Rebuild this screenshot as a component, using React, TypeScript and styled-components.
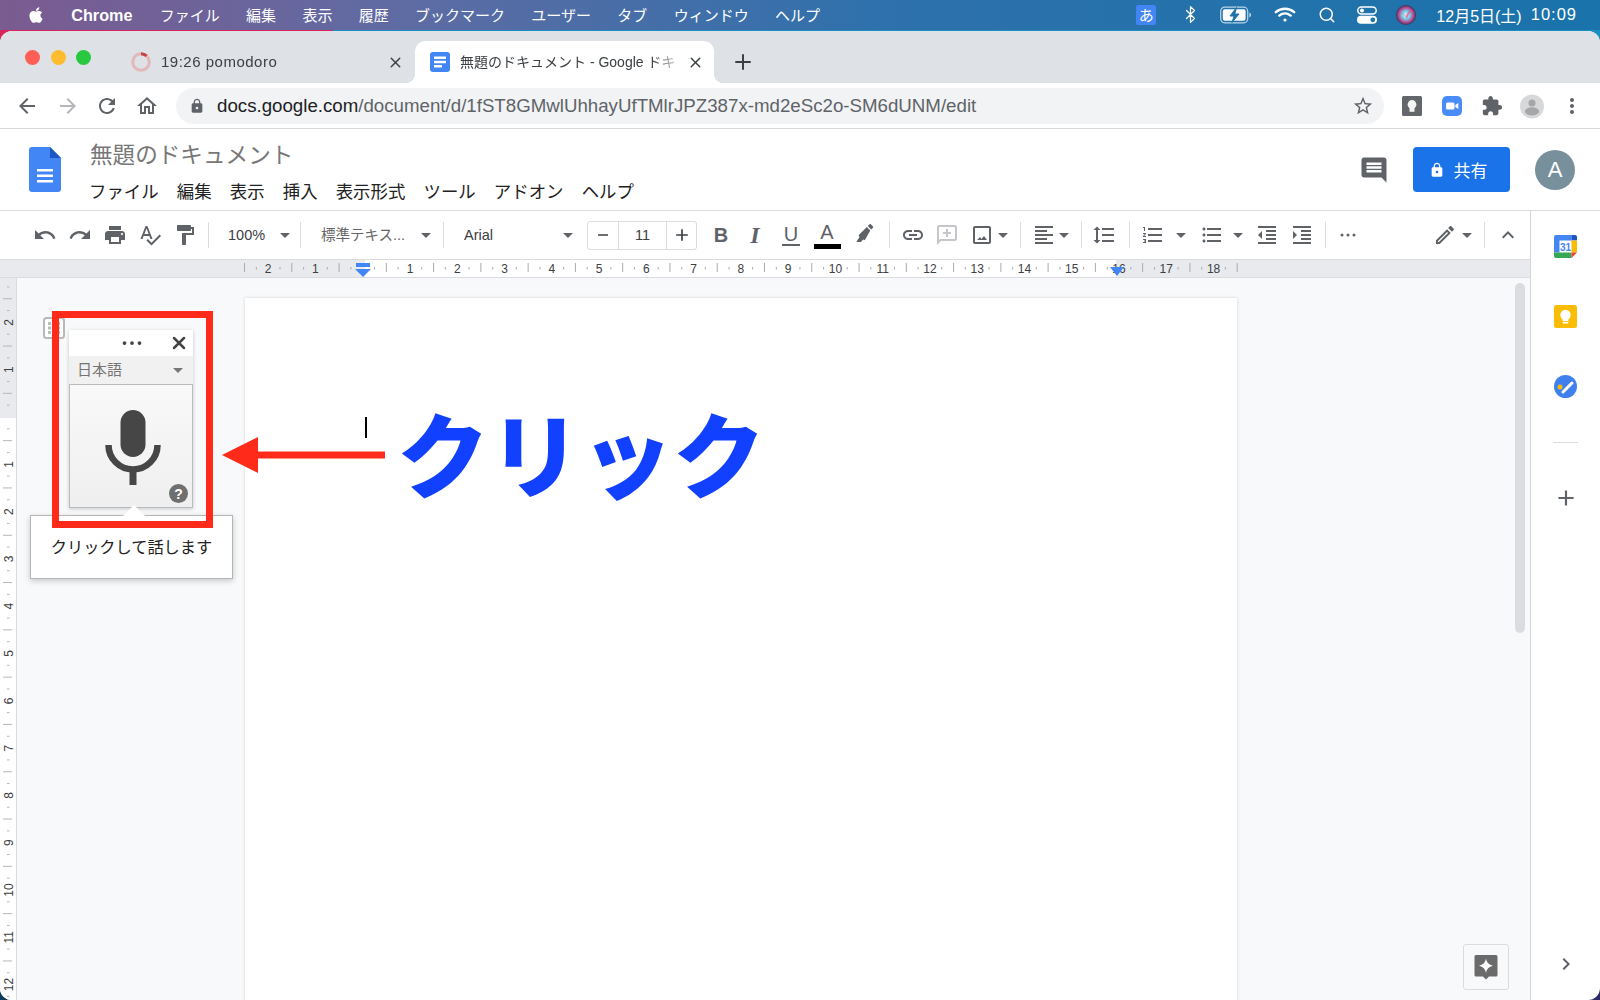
import React from 'react';
import styled, { createGlobalStyle } from 'styled-components';
import { FaApple } from 'react-icons/fa';
import { Bluetooth, Search, X, Plus } from 'lucide-react';

const UI = `"Liberation Sans", "Noto Sans CJK JP", sans-serif`;

const Global = createGlobalStyle`
  html, body { margin: 0; padding: 0; width: 1600px; height: 1000px; overflow: hidden; }
  body { font-family: ${UI}; }
  * { box-sizing: border-box; }
`;

const Desktop = styled.div`
  position: relative;
  width: 1600px;
  height: 1000px;
  overflow: hidden;
  display: flex;
  flex-direction: column;
  background:
    linear-gradient(90deg, #d8245c 0 333px, #1b8fc4 333px) top / 100% 60px no-repeat,
    linear-gradient(90deg, #0d3b5e, #2c2a66);
`;

const MenuBar = styled.div`
  height: 30px;
  flex: none;
  display: flex;
  align-items: center;
  padding: 0 23px 1px 27px;
  gap: 26.3px;
  color: #fff;
  font-size: 15px;
  background: linear-gradient(90deg, #7b5b90 0%, #5f6ba3 25%, #2e71ac 55%, #1a73ab 100%);
`;

const AppName = styled.b`
  font-size: 16.2px;
  margin: 1px 1px 0 0;
`;

const MenuRight = styled.div`
  margin-left: auto;
  display: flex;
  align-items: center;
`;

const StatusSlot = styled.span<{ $w: number; $ml: number }>`
  width: ${(p) => p.$w}px;
  margin-left: ${(p) => p.$ml}px;
  display: flex;
  align-items: center;
  justify-content: center;
  flex: none;
`;

const ImeBadge = styled.span`
  width: 20px;
  height: 20px;
  border-radius: 2px;
  background: #4285f4;
  color: #fff;
  font-size: 15px;
  display: flex;
  align-items: center;
  justify-content: center;
`;

const DateText = styled.span`
  margin-left: 20px;
  font-size: 16px;
  white-space: nowrap;
`;

const TimeText = styled.span`
  margin-left: 9px;
  font-size: 16.5px;
  letter-spacing: 1px;
  white-space: nowrap;
`;

const Win = styled.div`
  margin-top: 1px;
  flex: 1;
  min-height: 0;
  display: flex;
  flex-direction: column;
  background: #fff;
  border-radius: 12px;
  overflow: hidden;
`;

const TabStrip = styled.div`
  height: 52px;
  flex: none;
  background: #dee1e6;
  display: flex;
  align-items: flex-end;
  padding-left: 25px;
`;

const Lights = styled.div`
  display: flex;
  gap: 10.5px;
  width: 105px;
  height: 42px;
  padding-top: 9px;
  flex: none;
`;

const Light = styled.span<{ $c: string }>`
  width: 15px;
  height: 15px;
  border-radius: 50%;
  background: ${(p) => p.$c};
`;

const Tab = styled.div<{ $active?: boolean }>`
  position: relative;
  height: 42px;
  width: ${(p) => (p.$active ? 299 : 285)}px;
  flex: none;
  display: flex;
  align-items: center;
  font-size: 14px;
  color: #3c4043;
  background: ${(p) => (p.$active ? '#fff' : 'transparent')};
  border-radius: 10px 10px 0 0;
  padding-left: ${(p) => (p.$active ? 15 : 1)}px;
  ${(p) =>
    p.$active &&
    `
    &::before, &::after {
      content: '';
      position: absolute;
      bottom: 0;
      width: 10px;
      height: 10px;
    }
    &::before { left: -10px; background: radial-gradient(circle at 0 0, #dee1e6 10px, #fff 10.5px); }
    &::after { right: -10px; background: radial-gradient(circle at 100% 0, #dee1e6 10px, #fff 10.5px); }
  `}
`;

const TabTitle = styled.span<{ $w: number; $ml: number }>`
  width: ${(p) => p.$w}px;
  margin-left: ${(p) => p.$ml}px;
  margin-top: -2px;
  white-space: nowrap;
  overflow: hidden;
  flex: none;
  -webkit-mask-image: linear-gradient(90deg, #000 86%, transparent 100%);
  mask-image: linear-gradient(90deg, #000 86%, transparent 100%);
`;

const PomodoroTitle = styled(TabTitle)`
  font-size: 15px;
  letter-spacing: 0.5px;
`;

const TabClose = styled.span<{ $ml: number }>`
  margin-left: ${(p) => p.$ml}px;
  display: flex;
  color: #3c4043;
  flex: none;
`;

const NewTab = styled.span`
  margin-left: 17px;
  height: 42px;
  display: flex;
  align-items: center;
  color: #3c4043;
`;

const BrowserBar = styled.div`
  height: 46px;
  flex: none;
  display: flex;
  align-items: center;
  padding-left: 15px;
  padding-top: 1px;
  border-bottom: 1px solid #d7d9dc;
  background: #fff;
`;

const NavIcon = styled.span<{ $ml?: number; $c?: string }>`
  width: 24px;
  height: 24px;
  flex: none;
  margin-left: ${(p) => p.$ml ?? 0}px;
  color: ${(p) => p.$c ?? '#5f6368'};
  display: flex;
  align-items: center;
  justify-content: center;
`;

const Address = styled.div`
  width: 1208px;
  height: 36px;
  margin-left: 17px;
  border-radius: 18px;
  background: #f1f3f4;
  display: flex;
  align-items: center;
  padding: 0 10px 0 13px;
  flex: none;
  font-size: 18.7px;
  color: #5f6368;
`;

const Host = styled.span`
  color: #202124;
`;

const UrlText = styled.span`
  margin-left: 12px;
  white-space: nowrap;
`;

const Star = styled.span`
  margin-left: auto;
  display: flex;
  color: #5f6368;
`;

const DocHeader = styled.div`
  height: 81px;
  flex: none;
  display: flex;
  align-items: center;
  padding: 0 25px 0 29px;
`;

const DocTitles = styled.div`
  margin-left: 29px;
  display: flex;
  flex-direction: column;
  gap: 11px;
  margin-top: 7px;
`;

const DocTitle = styled.div`
  font-size: 22.6px;
  line-height: 26px;
  color: #777;
`;

const DocMenu = styled.div`
  display: flex;
  gap: 18.2px;
  margin-left: -1px;
  font-size: 17.4px;
  line-height: 24px;
  color: #222;
`;

const HeaderRight = styled.div`
  margin-left: auto;
  display: flex;
  align-items: center;
`;

const CommentsBtn = styled.span`
  display: flex;
  color: #5f6368;
  margin-right: 24px;
`;

const ShareBtn = styled.div`
  width: 97px;
  height: 45px;
  border-radius: 4px;
  background: #1a73e8;
  color: #fff;
  font-size: 17px;
  padding-right: 7px;
  display: flex;
  align-items: center;
  justify-content: center;
  gap: 9px;
`;

const Avatar = styled.div`
  width: 40px;
  height: 40px;
  margin-left: 25px;
  border-radius: 50%;
  background: #78909c;
  color: #fff;
  font-size: 22px;
  display: flex;
  align-items: center;
  justify-content: center;
`;

const Body = styled.div`
  flex: 1;
  min-height: 0;
  display: flex;
  border-top: 1px solid #dadce0;
`;

const Editor = styled.div`
  width: 1530px;
  flex: none;
  display: flex;
  flex-direction: column;
  min-height: 0;
`;

const Toolbar = styled.div`
  height: 48px;
  flex: none;
  display: flex;
  align-items: center;
  color: #5f6368;
  font-size: 14.5px;
`;

const Tool = styled.span<{ $ml?: number; $c?: string }>`
  width: 24px;
  height: 24px;
  flex: none;
  margin-left: ${(p) => p.$ml ?? 0}px;
  color: ${(p) => p.$c ?? '#5f6368'};
  display: flex;
  align-items: center;
  justify-content: center;
`;

const Sep = styled.span<{ $ml: number }>`
  width: 1px;
  height: 26px;
  background: #dadce0;
  margin-left: ${(p) => p.$ml}px;
  flex: none;
`;

const Caret = styled.span<{ $ml: number }>`
  width: 0;
  height: 0;
  flex: none;
  margin-left: ${(p) => p.$ml}px;
  border-left: 5px solid transparent;
  border-right: 5px solid transparent;
  border-top: 5px solid #5f6368;
`;

const Combo = styled.div<{ $w: number; $pl: number; $pr: number; $c?: string }>`
  width: ${(p) => p.$w}px;
  padding: 0 ${(p) => p.$pr}px 0 ${(p) => p.$pl}px;
  display: flex;
  align-items: center;
  justify-content: space-between;
  flex: none;
  color: ${(p) => p.$c ?? '#3c4043'};
  white-space: nowrap;
`;

const ComboLabel = styled.span`
  margin-top: -3px;
`;

const Spinner = styled.div`
  width: 110px;
  height: 29px;
  flex: none;
  display: grid;
  grid-template-columns: 30px 49px 1fr;
  border: 1px solid #dadce0;
  border-radius: 3px;
  color: #3c4043;
`;

const SpinCell = styled.span<{ $mid?: boolean }>`
  display: flex;
  align-items: center;
  justify-content: center;
  ${(p) => p.$mid && `border-left: 1px solid #dadce0; border-right: 1px solid #dadce0;`}
`;

const LetterTool = styled(Tool)`
  font-size: 20px;
  line-height: 24px;
  color: #5f6368;
`;

const BoldLetter = styled.b``;

const ItalicLetter = styled.span`
  font-family: "Liberation Serif", serif;
  font-style: italic;
  font-weight: 700;
  font-size: 24px;
`;

const UnderLetter = styled.span`
  border-bottom: 2px solid #5f6368;
  line-height: 20px;
  padding: 0 2px;
`;

const ColorLetter = styled.span`
  position: relative;
  width: 27px;
  height: 24px;
  margin-top: -6px;
  text-align: center;
  flex: none;
  &::after {
    content: '';
    position: absolute;
    left: 0;
    bottom: -5px;
    width: 27px;
    height: 5px;
    background: #000;
  }
`;

const Ruler = styled.div`
  flex: none;
  background: linear-gradient(90deg, #e8eaed 0 365px, #fff 365px 1116px, #e8eaed 1116px);
  border-top: 1px solid #dadce0;
  border-bottom: 1px solid #dadce0;
  box-sizing: content-box;
  height: 17px;
  overflow: hidden;
`;

const Canvas = styled.div`
  position: relative;
  flex: 1;
  min-height: 0;
  display: flex;
  background: #f8f9fa;
  overflow: hidden;
`;

const VRuler = styled.div`
  width: 17px;
  flex: none;
  background: linear-gradient(180deg, #e8eaed 0 140px, #fff 140px);
  border-right: 1px solid #dadce0;
`;

const Page = styled.div`
  width: 992px;
  margin: 20px 0 -40px 228px;
  background: #fff;
  flex: none;
  box-shadow: 0 0 3px rgba(60, 64, 67, 0.2);
`;

const Thumb = styled.div`
  position: absolute;
  left: 1515px;
  top: 5px;
  width: 10px;
  height: 350px;
  border-radius: 5px;
  background: #dadce0;
`;

const Explore = styled.div`
  position: absolute;
  left: 1463px;
  top: 666px;
  width: 46px;
  height: 46px;
  border: 1px solid #dadce0;
  border-radius: 3px;
  background: #f8f9fa;
  display: flex;
  align-items: center;
  justify-content: center;
`;

const SidePanel = styled.div`
  flex: 1;
  border-left: 1px solid #d4d6d9;
  display: flex;
  flex-direction: column;
  align-items: center;
  padding: 24px 0 24px;
`;

const SideGap = styled.span<{ $h: number }>`
  height: ${(p) => p.$h}px;
  flex: none;
`;

const SideLine = styled.span`
  width: 25px;
  height: 1px;
  background: #dadce0;
  flex: none;
`;

const SideBottom = styled.span`
  margin-top: auto;
  display: flex;
  color: #5f6368;
`;

/* overlay: voice typing widget and annotations */
const Handle = styled.div`
  position: absolute;
  left: 43px;
  top: 317px;
  display: flex;
`;

const Voice = styled.div`
  position: absolute;
  left: 69px;
  top: 330px;
  width: 124px;
  height: 178px;
  display: flex;
  flex-direction: column;
  box-shadow: 0 1px 4px rgba(0, 0, 0, 0.2);
`;

const VoiceTop = styled.div`
  height: 26px;
  flex: none;
  background: #fff;
  display: flex;
  align-items: center;
  justify-content: flex-end;
  padding-right: 4px;
  gap: 22px;
  color: #444;
`;

const VoiceLang = styled.div`
  height: 28px;
  flex: none;
  background: #f1f1f1;
  display: flex;
  align-items: center;
  justify-content: space-between;
  padding: 0 10px 3px 8px;
  font-size: 15px;
  color: #757575;
`;

const VoiceCaret = styled.span`
  border-left: 5px solid transparent;
  border-right: 5px solid transparent;
  border-top: 5px solid #777;
  margin-top: 3px;
`;

const MicBox = styled.div`
  position: relative;
  flex: 1;
  border: 1px solid #bbb;
  background: linear-gradient(180deg, #f9f9f9, #efefef);
  display: flex;
  justify-content: center;
  padding: 25px 0 0 3px;
`;

const HelpDot = styled.span`
  position: absolute;
  right: 4px;
  bottom: 4px;
  width: 19px;
  height: 19px;
  border-radius: 50%;
  background: #6f6f6f;
  color: #fff;
  font-size: 14px;
  font-weight: 700;
  display: flex;
  align-items: center;
  justify-content: center;
`;

const Hint = styled.div`
  position: absolute;
  left: 30px;
  top: 515px;
  width: 203px;
  height: 64px;
  background: #fff;
  border: 1px solid #b5b5b5;
  box-shadow: 0 2px 6px rgba(0, 0, 0, 0.2);
  font-size: 16.2px;
  color: #222;
  display: flex;
  justify-content: center;
  padding-top: 19px;
  line-height: 24px;
  &::before {
    content: '';
    position: absolute;
    left: 92px;
    top: -11px;
    border-left: 11px solid transparent;
    border-right: 11px solid transparent;
    border-bottom: 11px solid #fff;
  }
`;

const RedFrame = styled.div`
  position: absolute;
  left: 52px;
  top: 311px;
  width: 161px;
  height: 217px;
  border: 7px solid #ff2a1a;
`;

const Arrow = styled.div`
  position: absolute;
  left: 222px;
  top: 436px;
  display: flex;
`;

const Cursor = styled.div`
  position: absolute;
  left: 365px;
  top: 417px;
  width: 2px;
  height: 21px;
  background: #000;
`;

const ClickLabel = styled.div`
  position: absolute;
  left: 397px;
  top: 384px;
  font-family: "Noto Sans CJK JP", sans-serif;
  font-weight: 900;
  font-size: 92px;
  line-height: 133px;
  color: #1140ff;
  white-space: nowrap;
`;

const M = ({ d, size = 24, fill = 'currentColor' }: { d: string; size?: number; fill?: string }) => (
  <svg width={size} height={size} viewBox="0 0 24 24" fill={fill}>
    <path d={d} />
  </svg>
);

const P = {
  back: 'M20 11H7.83l5.59-5.59L12 4l-8 8 8 8 1.41-1.41L7.83 13H20v-2z',
  fwd: 'M12 4l-1.41 1.41L16.17 11H4v2h12.17l-5.58 5.59L12 20l8-8z',
  reload: 'M17.65 6.35C16.2 4.9 14.21 4 12 4c-4.42 0-7.99 3.58-7.99 8s3.57 8 7.99 8c3.73 0 6.84-2.55 7.73-6h-2.08c-.82 2.33-3.04 4-5.65 4-3.31 0-6-2.69-6-6s2.69-6 6-6c1.66 0 3.14.69 4.22 1.78L13 11h7V4l-2.35 2.35z',
  home: 'M12 5.69l5 4.5V18h-2v-6H9v6H7v-7.81l5-4.5M12 3L2 12h3v8h6v-6h2v6h6v-8h3L12 3z',
  star: 'M22 9.24l-7.19-.62L12 2 9.19 8.63 2 9.24l5.46 4.73L5.82 21 12 17.27 18.18 21l-1.63-7.03L22 9.24zM12 15.4l-3.76 2.27 1-4.28-3.32-2.88 4.38-.38L12 6.1l1.71 4.04 4.38.38-3.32 2.88 1 4.28L12 15.4z',
  lock: 'M18 8h-1V6c0-2.76-2.24-5-5-5S7 3.24 7 6v2H6c-1.1 0-2 .9-2 2v10c0 1.1.9 2 2 2h12c1.1 0 2-.9 2-2V10c0-1.1-.9-2-2-2zm-6 9c-1.1 0-2-.9-2-2s.9-2 2-2 2 .9 2 2-.9 2-2 2zm3.1-9H8.9V6c0-1.71 1.39-3.1 3.1-3.1 1.71 0 3.1 1.39 3.1 3.1v2z',
  puzzle: 'M20.5 11H19V7c0-1.1-.9-2-2-2h-4V3.5C13 2.12 11.88 1 10.5 1S8 2.12 8 3.5V5H4c-1.1 0-1.99.9-1.99 2v3.8H3.5c1.49 0 2.7 1.21 2.7 2.7s-1.21 2.7-2.7 2.7H2V20c0 1.1.9 2 2 2h3.8v-1.5c0-1.49 1.21-2.7 2.7-2.7 1.49 0 2.7 1.21 2.7 2.7V22H17c1.1 0 2-.9 2-2v-4h1.5c1.38 0 2.5-1.12 2.5-2.5S21.88 11 20.5 11z',
  dots: 'M12 8c1.1 0 2-.9 2-2s-.9-2-2-2-2 .9-2 2 .9 2 2 2zm0 2c-1.1 0-2 .9-2 2s.9 2 2 2 2-.9 2-2-.9-2-2-2zm0 6c-1.1 0-2 .9-2 2s.9 2 2 2 2-.9 2-2-.9-2-2-2z',
  comments: 'M21.99 4c0-1.1-.89-2-1.99-2H4c-1.1 0-2 .9-2 2v12c0 1.1.9 2 2 2h14l4 4-.01-18zM18 14H6v-2h12v2zm0-3H6V9h12v2zm0-3H6V6h12v2z',
  undo: 'M12.5 8c-2.65 0-5.05.99-6.9 2.6L2 7v9h9l-3.62-3.62c1.39-1.16 3.16-1.88 5.12-1.88 3.54 0 6.55 2.31 7.6 5.5l2.37-.78C21.08 11.03 17.15 8 12.5 8z',
  redo: 'M18.4 10.6C16.55 8.99 14.15 8 11.5 8c-4.65 0-8.58 3.03-9.96 7.22L3.9 16c1.05-3.19 4.05-5.5 7.6-5.5 1.95 0 3.73.72 5.12 1.88L13 16h9V7l-3.6 3.6z',
  print: 'M19 8H5c-1.66 0-3 1.34-3 3v6h4v4h12v-4h4v-6c0-1.66-1.34-3-3-3zm-3 11H8v-5h8v5zm3-7c-.55 0-1-.45-1-1s.45-1 1-1 1 .45 1 1-.45 1-1 1zm-1-9H6v4h12V3z',
  spell: 'M12.45 16h2.09L9.43 3H7.57L2.46 16h2.09l1.12-3h5.64l1.14 3zm-6.02-5L8.5 5.48 10.57 11H6.43zm15.16.59l-8.09 8.09L9.83 16l-1.41 1.41 5.09 5.09L23 13l-1.41-1.41z',
  paint: 'M18 4V3c0-.55-.45-1-1-1H5c-.55 0-1 .45-1 1v4c0 .55.45 1 1 1h12c.55 0 1-.45 1-1V6h1v4H9v11c0 .55.45 1 1 1h2c.55 0 1-.45 1-1v-9h8V4h-3z',
  marker: 'M17.75 7L14 3.25l-9 9 1 2-3.5 5.5h5L10 17l1.75.75 6-10.75zm2.96-2.96c.39-.39.39-1.02 0-1.41L18.37.29c-.39-.39-1.02-.39-1.41 0L15 2.25 18.75 6l1.96-1.96z',
  link: 'M3.9 12c0-1.71 1.39-3.1 3.1-3.1h4V7H7c-2.76 0-5 2.24-5 5s2.24 5 5 5h4v-1.9H7c-1.71 0-3.1-1.39-3.1-3.1zM8 13h8v-2H8v2zm9-6h-4v1.9h4c1.71 0 3.1 1.39 3.1 3.1s-1.39 3.1-3.1 3.1h-4V17h4c2.76 0 5-2.24 5-5s-2.24-5-5-5z',
  addComment: 'M20 2H4c-1.1 0-2 .9-2 2v18l4-4h14c1.1 0 2-.9 2-2V4c0-1.1-.9-2-2-2zm0 14H5.17L4 17.17V4h16v12zM13 6h-2v3H8v2h3v3h2v-3h3V9h-3z',
  image: 'M19 3H5c-1.1 0-2 .9-2 2v14c0 1.1.9 2 2 2h14c1.1 0 2-.9 2-2V5c0-1.1-.9-2-2-2zm0 16H5V5h14v14zM7 17h10l-3-4-2.5 3-1.5-2z',
  align: 'M15 15H3v2h12v-2zm0-8H3v2h12V7zM3 13h18v-2H3v2zm0 8h18v-2H3v2zM3 3v2h18V3H3z',
  spacing: 'M6 7h2.5L5 3.5 1.5 7H4v10H1.5L5 20.5 8.5 17H6V7zm4-2v2h12V5H10zm0 14h12v-2H10v2zm0-6h12v-2H10v2z',
  numList: 'M2 17h2v.5H3v1h1v.5H2v1h3v-4H2v1zm1-9h1V4H2v1h1v3zm-1 3h1.8L2 13.1v.9h3v-1H3.2L5 10.9V10H2v1zm5-6v2h14V5H7zm0 14h14v-2H7v2zm0-6h14v-2H7v2z',
  bullets: 'M4 10.5c-.83 0-1.5.67-1.5 1.5s.67 1.5 1.5 1.5 1.5-.67 1.5-1.5-.67-1.5-1.5-1.5zm0-6c-.83 0-1.5.67-1.5 1.5S3.17 7.5 4 7.5 5.5 6.83 5.5 6 4.83 4.5 4 4.5zm0 12c-.83 0-1.5.68-1.5 1.5s.68 1.5 1.5 1.5 1.5-.68 1.5-1.5-.67-1.5-1.5-1.5zM7 19h14v-2H7v2zm0-6h14v-2H7v2zm0-8v2h14V5H7z',
  outdent: 'M11 17h10v-2H11v2zm-8-5l4 4V8l-4 4zm0 9h18v-2H3v2zM3 3v2h18V3H3zm8 6h10V7H11v2zm0 4h10v-2H11v2z',
  indent: 'M3 21h18v-2H3v2zM3 8v8l4-4-4-4zm8 9h10v-2H11v2zM3 3v2h18V3H3zm8 6h10V7H11v2zm0 4h10v-2H11v2z',
  more: 'M6 10.5a1.5 1.5 0 1 0 0 3 1.5 1.5 0 0 0 0-3zm6 0a1.5 1.5 0 1 0 0 3 1.5 1.5 0 0 0 0-3zm6 0a1.5 1.5 0 1 0 0 3 1.5 1.5 0 0 0 0-3z',
  pencil: 'M3 17.25V21h3.75L17.81 9.94l-3.75-3.75L3 17.25zM5.92 19H5v-.92l9.06-9.06.92.92L5.92 19zM20.71 5.63l-2.34-2.34c-.2-.2-.45-.29-.71-.29s-.51.1-.7.29l-1.83 1.83 3.75 3.75 1.83-1.83c.39-.39.39-1.02 0-1.41z',
  up: 'M12 8l-6 6 1.41 1.41L12 10.83l4.59 4.58L18 14z',
  right: 'M10 6L8.59 7.41 13.17 12l-4.58 4.59L10 18l6-6z',
  minus: 'M6 11h12v2H6z',
  plus: 'M19 13h-6v6h-2v-6H5v-2h6V5h2v6h6v2z',
};

const DocsLogo = ({ w, h }: { w: number; h: number }) => (
  <svg width={w} height={h} viewBox="0 0 32 45">
    <path d="M3 0h18l11 11v31a3 3 0 0 1-3 3H3a3 3 0 0 1-3-3V3a3 3 0 0 1 3-3z" fill="#4285f4" />
    <path d="M21 0l11 11H21z" fill="#1a56c4" />
    <path d="M8 22h16v2.5H8zM8 27.5h16V30H8zM8 33h16v2.5H8z" fill="#fff" />
  </svg>
);

const TabDocsIcon = () => (
  <svg width="20" height="20" viewBox="0 0 20 20">
    <rect width="20" height="20" rx="3" fill="#4285f4" />
    <path d="M4 4.5h12v2.4H4zM4 8.8h12v2.4H4zM4 13.1h8v2.4H4z" fill="#fff" />
  </svg>
);

const PomodoroRing = () => (
  <svg width="20" height="20" viewBox="0 0 20 20">
    <circle cx="10" cy="10" r="8.3" fill="none" stroke="#e2b8ba" strokeWidth="3" />
    <path d="M10 1.7A8.3 8.3 0 0 1 15.6 3.9" fill="none" stroke="#c8433f" strokeWidth="3" />
  </svg>
);

const Battery = () => (
  <svg width="32" height="18" viewBox="0 0 32 18">
    <rect x="0.7" y="1.2" width="27" height="15.6" rx="4" fill="none" stroke="#b9d3e6" strokeWidth="1.2" />
    <rect x="2.8" y="3.2" width="22.8" height="11.6" rx="2" fill="#fff" />
    <path d="M29.3 6.5c1.2.4 1.8 1.3 1.8 2.5s-.6 2.1-1.8 2.5z" fill="#b9d3e6" />
    <path d="M16.5 1.5L10 10h4l-2 6.5L19 8h-4.2z" fill="#1f74ab" stroke="#1f74ab" strokeWidth="1" />
  </svg>
);

const WifiMark = () => (
  <svg width="22" height="17" viewBox="0 0 22 17" fill="none" stroke="#fff" strokeWidth="2.4" strokeLinecap="round">
    <path d="M1.8 6.2c5.4-4.6 13-4.6 18.4 0" />
    <path d="M5.3 9.6c3.4-2.8 8-2.8 11.4 0" />
    <circle cx="11" cy="14" r="1.6" fill="#fff" stroke="none" />
  </svg>
);

const Toggles = () => (
  <svg width="20" height="18" viewBox="0 0 20 18">
    <rect x="0.8" y="1" width="18.4" height="7" rx="3.5" fill="none" stroke="#fff" strokeWidth="1.5" />
    <circle cx="5" cy="4.5" r="2" fill="#fff" />
    <rect x="0" y="9.8" width="20" height="8" rx="4" fill="#fff" />
    <circle cx="15.8" cy="13.8" r="2.4" fill="#1f74ab" />
  </svg>
);

const Siri = () => (
  <svg width="20" height="20" viewBox="0 0 20 20">
    <defs>
      <radialGradient id="siri" cx="50%" cy="50%" r="50%">
        <stop offset="0%" stopColor="#e8fbff" />
        <stop offset="40%" stopColor="#6fd0e8" />
        <stop offset="70%" stopColor="#c0519b" />
        <stop offset="100%" stopColor="#3a3150" />
      </radialGradient>
    </defs>
    <circle cx="10" cy="10" r="10" fill="url(#siri)" />
    <path d="M3 8c3-1 5 1 7 3 1-3 3-6 7-5-3 1-5 4-6 8-1-3-4-6-8-6z" fill="#f04e7c" opacity="0.7" />
  </svg>
);

const KeepExt = () => (
  <svg width="20" height="20" viewBox="0 0 20 20">
    <rect width="20" height="20" rx="1.5" fill="#63676b" />
    <circle cx="10" cy="8.5" r="4.4" fill="#f4f4f4" />
    <rect x="7.5" y="12" width="5" height="3.8" fill="#f4f4f4" />
  </svg>
);

const ZoomExt = () => (
  <svg width="20" height="20" viewBox="0 0 20 20">
    <rect width="20" height="20" rx="5" fill="#4a8cf7" />
    <rect x="4" y="6.5" width="8.5" height="7" rx="1.5" fill="#fff" />
    <path d="M13.3 9l3-2v6l-3-2z" fill="#fff" />
  </svg>
);

const ProfileExt = () => (
  <svg width="27" height="27" viewBox="0 0 27 27">
    <circle cx="13.5" cy="13.5" r="13.5" fill="#d7d8da" />
    <circle cx="13.5" cy="9.5" r="4" fill="#a6a7a9" />
    <ellipse cx="13.5" cy="19" rx="8" ry="4.6" fill="#a6a7a9" />
  </svg>
);

const CalendarApp = () => (
  <svg width="23" height="23" viewBox="0 0 23 23">
    <rect width="23" height="23" rx="2" fill="#fff" />
    <path d="M2 0h15.5v5.5H5.5V17.5H0V2a2 2 0 0 1 2-2z" fill="#4285f4" />
    <path d="M17.5 0H21a2 2 0 0 1 2 2v3.5h-5.5z" fill="#1a56c4" />
    <path d="M17.5 5.5H23v12h-5.5z" fill="#fbbc04" />
    <path d="M0 17.5h17.5V23H2a2 2 0 0 1-2-2z" fill="#34a853" />
    <path d="M17.5 17.5H23L17.5 23z" fill="#ea4335" />
    <text x="11.5" y="15.5" textAnchor="middle" fontSize="10" fontWeight="700" fill="#4285f4" fontFamily="Liberation Sans, sans-serif">31</text>
  </svg>
);

const KeepApp = () => (
  <svg width="23" height="23" viewBox="0 0 23 23">
    <rect width="23" height="23" rx="2.5" fill="#fbbc04" />
    <circle cx="11.5" cy="10" r="5.2" fill="#fff" />
    <rect x="8.7" y="14" width="5.6" height="2.2" fill="#fff" />
    <rect x="8.7" y="17" width="5.6" height="1.5" fill="#fff" />
  </svg>
);

const TasksApp = () => (
  <svg width="23" height="23" viewBox="0 0 23 23">
    <circle cx="11.5" cy="11.5" r="11.5" fill="#3f80ee" />
    <circle cx="6" cy="12" r="2.5" fill="#fbbc04" />
    <path d="M9 17l9-9" stroke="#fff" strokeWidth="3" strokeLinecap="round" />
  </svg>
);

const ExploreIcon = () => (
  <svg width="24" height="26" viewBox="0 0 24 26">
    <path d="M2 1h20a1.5 1.5 0 0 1 1.5 1.5V21a1.5 1.5 0 0 1-1.5 1.5h-7L12 25.5 9 22.500H2A1.500 1.500 0 0 1 .5 21V2.500A1.500 1.500 0 0 1 2 1z" fill="#6b6b6b" />
    <path d="M12 4.500c.8 4 2.800 6 7 7.200-4.200 1.200-6.200 3.200-7 7.200-.8-4-2.800-6-7-7.200 4.200-1.200 6.200-3.200 7-7.200z" fill="#fff" />
  </svg>
);

const GridHandle = () => (
  <svg width="22" height="22" viewBox="0 0 22 22">
    <rect x="1" y="1" width="20" height="20" rx="2.5" fill="#fff" stroke="#b8b8b8" strokeWidth="2" />
    {[5, 9.5, 14].map((x) =>
      [5, 9.5, 14].map((y) => <rect key={`${x}-${y}`} x={x} y={y} width="3" height="3" fill="#bbb" />),
    )}
  </svg>
);

const MicIcon = () => (
  <svg width="56" height="76" viewBox="0 0 56 76">
    <rect x="15.500" y="0" width="25" height="47" rx="12.500" fill="#464646" />
    <path d="M3.500 35a24.500 24.500 0 0 0 49 0" fill="none" stroke="#464646" strokeWidth="6.500" />
    <rect x="24.500" y="58" width="7" height="17" fill="#464646" />
  </svg>
);

const RedArrow = () => (
  <svg width="163" height="38" viewBox="0 0 163 38">
    <path d="M0 19L36 1v14.500h127v7H36V37z" fill="#ff2a1a" />
  </svg>
);

const HRuler = () => {
  const X = (u: number) => 362.7 + 47.27 * u;
  const marks: number[] = [];
  for (let q = -10; q <= 74; q++) marks.push(q / 4);
  return (
    <svg width="1530" height="16" viewBox="0 0 1530 16">
      {marks.map((u) => {
        const isNum = Number.isInteger(u) && u !== 0;
        const half = !Number.isInteger(u) && Number.isInteger(u * 2);
        if (isNum) {
          return (
            <text key={u} x={X(u)} y="12.500" textAnchor="middle" fontSize="12" fill="#3c4043" fontFamily="Liberation Sans, sans-serif">
              {Math.abs(u)}
            </text>
          );
        }
        if (u === 0) return null;
        return (
          <line key={u} x1={X(u)} x2={X(u)} y1={half ? 3 : 7} y2={half ? 12 : 9.500} stroke="#a8abaf" strokeWidth="1" />
        );
      })}
    </svg>
  );
};

const VRulerMarks = () => {
  const Y = (u: number) => 139 + 47.3 * u;
  const marks: number[] = [];
  for (let q = -11; q <= 49; q++) marks.push(q / 4);
  return (
    <svg width="16" height="723" viewBox="0 0 16 723">
      {marks.map((u) => {
        const isNum = Number.isInteger(u) && u !== 0;
        const half = !Number.isInteger(u) && Number.isInteger(u * 2);
        if (isNum) {
          return (
            <text key={u} transform={`translate(12.500 ${Y(u)}) rotate(-90)`} textAnchor="middle" fontSize="12" fill="#3c4043" fontFamily="Liberation Sans, sans-serif">
              {Math.abs(u)}
            </text>
          );
        }
        if (u === 0) return null;
        return <line key={u} y1={Y(u)} y2={Y(u)} x1={half ? 3 : 7} x2={half ? 12 : 9.500} stroke="#b5b7ba" strokeWidth="1" />;
      })}
    </svg>
  );
};

const IndentMarkers = styled.div`
  position: absolute;
  left: 0;
  top: 0;
  width: 0;
  height: 0;
`;

const RulerLeftMark = styled.div`
  position: absolute;
  left: 355px;
  top: 263px;
  display: flex;
`;

const RulerRightMark = styled.div`
  position: absolute;
  left: 1110px;
  top: 267px;
  display: flex;
`;

const menus = ['ファイル', '編集', '表示', '履歴', 'ブックマーク', 'ユーザー', 'タブ', 'ウィンドウ', 'ヘルプ'];
const docMenus = ['ファイル', '編集', '表示', '挿入', '表示形式', 'ツール', 'アドオン', 'ヘルプ'];

export default function App() {
  return (
    <Desktop>
      <Global />
      <MenuBar>
        <FaApple size={18} />
        <AppName>Chrome</AppName>
        {menus.map((m) => (
          <span key={m}>{m}</span>
        ))}
        <MenuRight>
          <ImeBadge>あ</ImeBadge>
          <StatusSlot $w={20} $ml={24}><Bluetooth size={19} strokeWidth={1.6} /></StatusSlot>
          <StatusSlot $w={32} $ml={20}><Battery /></StatusSlot>
          <StatusSlot $w={22} $ml={22}><WifiMark /></StatusSlot>
          <StatusSlot $w={18} $ml={22}><Search size={18} strokeWidth={2} /></StatusSlot>
          <StatusSlot $w={20} $ml={21}><Toggles /></StatusSlot>
          <StatusSlot $w={20} $ml={19}><Siri /></StatusSlot>
          <DateText>12月5日(土)</DateText>
          <TimeText>10:09</TimeText>
        </MenuRight>
      </MenuBar>
      <Win>
        <TabStrip>
          <Lights>
            <Light $c="#ff5f57" />
            <Light $c="#febc2e" />
            <Light $c="#28c840" />
          </Lights>
          <Tab>
            <PomodoroRing />
            <PomodoroTitle $w={200} $ml={10}>19:26 pomodoro</PomodoroTitle>
            <TabClose $ml={26}><X size={17} strokeWidth={2} /></TabClose>
          </Tab>
          <Tab $active>
            <TabDocsIcon />
            <TabTitle $w={224} $ml={10}>無題のドキュメント - Google ドキ</TabTitle>
            <TabClose $ml={3}><X size={17} strokeWidth={2} /></TabClose>
          </Tab>
          <NewTab><Plus size={24} strokeWidth={2} /></NewTab>
        </TabStrip>
        <BrowserBar>
          <NavIcon><M d={P.back} /></NavIcon>
          <NavIcon $ml={17} $c="#b4b6b9"><M d={P.fwd} /></NavIcon>
          <NavIcon $ml={15}><M d={P.reload} /></NavIcon>
          <NavIcon $ml={16}><M d={P.home} /></NavIcon>
          <Address>
            <M d={P.lock} size={16} />
            <UrlText>
              <Host>docs.google.com</Host>/document/d/1fST8GMwlUhhayUfTMlrJPZ387x-md2eSc2o-SM6dUNM/edit
            </UrlText>
            <Star><M d={P.star} size={22} /></Star>
          </Address>
          <NavIcon $ml={16}><KeepExt /></NavIcon>
          <NavIcon $ml={16}><ZoomExt /></NavIcon>
          <NavIcon $ml={16}><M d={P.puzzle} size={22} /></NavIcon>
          <NavIcon $ml={16}><ProfileExt /></NavIcon>
          <NavIcon $ml={16}><M d={P.dots} /></NavIcon>
        </BrowserBar>
        <DocHeader>
          <DocsLogo w={32} h={45} />
          <DocTitles>
            <DocTitle>無題のドキュメント</DocTitle>
            <DocMenu>
              {docMenus.map((m) => (
                <span key={m}>{m}</span>
              ))}
            </DocMenu>
          </DocTitles>
          <HeaderRight>
            <CommentsBtn><M d={P.comments} size={30} /></CommentsBtn>
            <ShareBtn>
              <M d={P.lock} size={16} />
              共有
            </ShareBtn>
            <Avatar>A</Avatar>
          </HeaderRight>
        </DocHeader>
        <Body>
          <Editor>
            <Toolbar>
              <Tool $ml={33}><M d={P.undo} /></Tool>
              <Tool $ml={11}><M d={P.redo} /></Tool>
              <Tool $ml={11}><M d={P.print} /></Tool>
              <Tool $ml={11}><M d={P.spell} /></Tool>
              <Tool $ml={11}><M d={P.paint} /></Tool>
              <Sep $ml={11} />
              <Combo $w={91} $pl={19} $pr={10}>100%<Caret $ml={0} /></Combo>
              <Sep $ml={0} />
              <Combo $w={142} $pl={20} $pr={12} $c="#666"><ComboLabel>標準テキス...</ComboLabel><Caret $ml={0} /></Combo>
              <Sep $ml={0} />
              <Combo $w={143} $pl={20} $pr={14}>Arial<Caret $ml={0} /></Combo>
              <Spinner>
                <SpinCell><M d={P.minus} size={20} /></SpinCell>
                <SpinCell $mid>11</SpinCell>
                <SpinCell><M d={P.plus} size={20} /></SpinCell>
              </Spinner>
              <LetterTool $ml={12}><BoldLetter>B</BoldLetter></LetterTool>
              <LetterTool $ml={10}><ItalicLetter>I</ItalicLetter></LetterTool>
              <LetterTool $ml={12}><UnderLetter>U</UnderLetter></LetterTool>
              <LetterTool $ml={12}><ColorLetter>A</ColorLetter></LetterTool>
              <Tool $ml={14}><M d={P.marker} size={22} /></Tool>
              <Sep $ml={12} />
              <Tool $ml={11}><M d={P.link} /></Tool>
              <Tool $ml={10} $c="#c4c6c9"><M d={P.addComment} /></Tool>
              <Tool $ml={11}><M d={P.image} /></Tool>
              <Caret $ml={4} />
              <Sep $ml={12} />
              <Tool $ml={11}><M d={P.align} /></Tool>
              <Caret $ml={3} />
              <Sep $ml={12} />
              <Tool $ml={10}><M d={P.spacing} /></Tool>
              <Sep $ml={13} />
              <Tool $ml={11}><M d={P.numList} /></Tool>
              <Caret $ml={11} />
              <Tool $ml={14}><M d={P.bullets} /></Tool>
              <Caret $ml={9} />
              <Tool $ml={12}><M d={P.outdent} /></Tool>
              <Tool $ml={11}><M d={P.indent} /></Tool>
              <Sep $ml={11} />
              <Tool $ml={10}><M d={P.more} /></Tool>
              <Tool $ml={73}><M d={P.pencil} /></Tool>
              <Caret $ml={5} />
              <Sep $ml={12} />
              <Tool $ml={11}><M d={P.up} size={28} /></Tool>
            </Toolbar>
            <Ruler><HRuler /></Ruler>
            <Canvas>
              <VRuler><VRulerMarks /></VRuler>
              <Page />
              <Thumb />
              <Explore><ExploreIcon /></Explore>
            </Canvas>
          </Editor>
          <SidePanel>
            <CalendarApp />
            <SideGap $h={47} />
            <KeepApp />
            <SideGap $h={47} />
            <TasksApp />
            <SideGap $h={44} />
            <SideLine />
            <SideGap $h={42} />
            <M d={P.plus} size={26} fill="#5f6368" />
            <SideBottom><M d={P.right} /></SideBottom>
          </SidePanel>
        </Body>
      </Win>
      <IndentMarkers>
        <RulerLeftMark>
          <svg width="16" height="15" viewBox="0 0 16 15">
            <rect x="1" y="0" width="14" height="4" fill="#4285f4" />
            <path d="M0 6h16l-8 8z" fill="#4285f4" />
          </svg>
        </RulerLeftMark>
        <RulerRightMark>
          <svg width="14" height="10" viewBox="0 0 14 10">
            <path d="M0 0h14l-7 9z" fill="#4285f4" />
          </svg>
        </RulerRightMark>
      </IndentMarkers>
      <Handle><GridHandle /></Handle>
      <Voice>
        <VoiceTop>
          <M d={P.more} size={30} fill="#444" />
          <X size={20} strokeWidth={3} />
        </VoiceTop>
        <VoiceLang>
          日本語
          <VoiceCaret />
        </VoiceLang>
        <MicBox>
          <MicIcon />
          <HelpDot>?</HelpDot>
        </MicBox>
      </Voice>
      <Hint>クリックして話します</Hint>
      <RedFrame />
      <Arrow><RedArrow /></Arrow>
      <Cursor />
      <ClickLabel>クリック</ClickLabel>
    </Desktop>
  );
}
